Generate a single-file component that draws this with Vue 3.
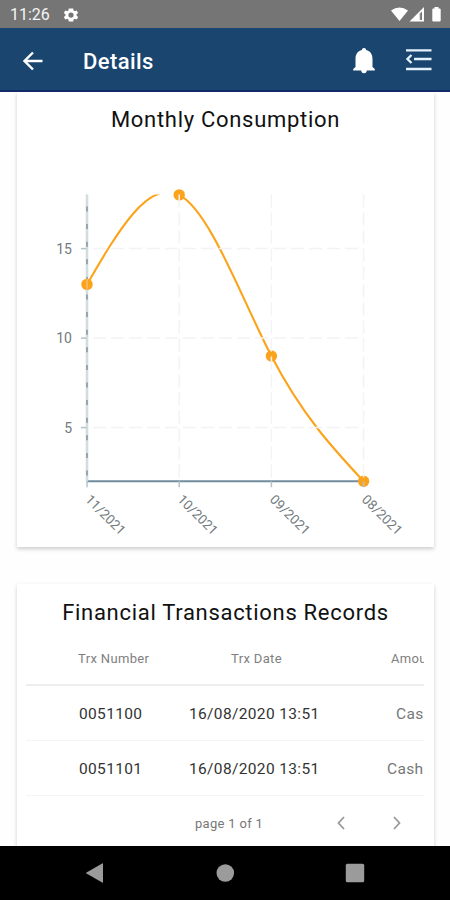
<template>
    <div class="screen">
        <div class="statusbar">
            <span class="time">11:26</span>
            <svg class="cog" viewBox="0 0 24 24"><path fill="#fff" d="M19.4 13a7.5 7.5 0 0 0 0-2l2.1-1.6-2-3.5-2.5 1a7 7 0 0 0-1.7-1L15 3.2H9l-.4 2.7a7 7 0 0 0-1.7 1l-2.5-1-2 3.5L4.6 11a7.5 7.5 0 0 0 0 2l-2.2 1.6 2 3.5 2.5-1a7 7 0 0 0 1.7 1l.4 2.7h6l.4-2.7a7 7 0 0 0 1.7-1l2.5 1 2-3.5zM12 15.500a3.500 3.500 0 1 1 0-7 3.500 3.500 0 0 1 0 7z" /></svg>
            <svg class="signals" viewBox="0 0 54 18">
                <path fill="#fff" d="M1 4.500Q9.500-1.300 18 4.500L9.500 15z" />
                <path fill="#fff" fill-rule="evenodd" d="M34 1v14.500H19.500zM29 8.500v5.500h3V5.500z" />
                <path fill="#ddd" d="M29 8.500l1.200-1.200V14H29z" />
                <path fill="#fff" d="M44.500 1h4v1.500h1.200q1 0 1 1V14.500q0 1-1 1h-6.400q-1 0-1-1V3.500q0-1 1-1h1.200z" />
            </svg>
        </div>
        <header class="appbar">
            <svg class="back" viewBox="0 0 20 20"><path d="M19.500 10H2M10 1.500L1.500 10l8.500 8.500" fill="none" stroke="#fff" stroke-width="2.400" /></svg>
            <h1>Details</h1>
            <svg class="bell" viewBox="0 0 22 26"><path fill="#fff" d="M11 0c1.300 0 2 .8 2.100 2 4.400 1 6.400 4.500 6.400 9v8l2.300 2v1.600H.2V21l2.300-2v-8c0-4.500 2-8 6.400-9C9 .8 9.700 0 11 0zM8.300 22.600h5.400a2.700 2.700 0 0 1-5.400 0z" /></svg>
            <svg class="menu" viewBox="0 0 26 24"><path d="M0 2.300h25.500M8 11h17.500M0 21h25.500M5.500 7L1.500 11l4 4" fill="none" stroke="#e6f1fb" stroke-width="2.300" /></svg>
        </header>
        <main class="content">
            <section class="card consumption">
                <h2>Monthly Consumption</h2>
                <svg class="chart" viewBox="0 0 417 400">
                    <defs>
                        <clipPath id="plot"><rect :x="left" :y="top" width="277" height="287" /></clipPath>
                    </defs>
                    <path class="axis" :d="`M${left} ${bottom}H${toX(3)}`" />
                    <path class="yaxis" :d="`M${left} ${top}V${bottom}`" />
                    <path class="ydash" :d="`M${left} ${top + 12}V${bottom}`" />
                    <path class="line" :d="curve" clip-path="url(#plot)" />
                    <circle v-for="(p, i) in points" :key="p.month" :cx="toX(i)" :cy="toY(p.value)" r="5.7" fill="#fca31c" />
                    <g v-for="t in ticks" :key="t">
                        <path class="grid" :d="`M${left + 6} ${toY(t)}H${toX(3)}`" />
                        <path class="tick" :d="`M${left - 6} ${toY(t)}h6`" />
                        <text class="label" :x="left - 15" :y="toY(t) + 5" text-anchor="end">{{ t }}</text>
                    </g>
                    <g v-for="(p, i) in points" :key="p.month">
                        <path :class="i ? 'grid' : 'shine'" :d="`M${toX(i)} ${top}V${bottom}`" />
                        <path class="tick" :d="`M${toX(i)} ${bottom}v6`" />
                        <text class="label month" :transform="`translate(${toX(i) - 2.5} ${bottom + 19}) rotate(45)`">{{ p.month }}</text>
                    </g>
                </svg>
            </section>
            <section class="card records">
                <h2>Financial Transactions Records</h2>
                <div class="table">
                    <div class="row head">
                        <span>Trx Number</span><span>Trx Date</span><span class="amount">Amount</span>
                    </div>
                    <div v-for="trx in transactions" :key="trx.number" class="row">
                        <span>{{ trx.number }}</span><span>{{ trx.date }}</span><span class="type" :class="{ cut: trx.type == 'Cas' }">{{ trx.type }}</span>
                    </div>
                </div>
                <div class="pager">
                    <span>page 1 of 1</span>
                    <svg viewBox="0 0 8 14"><path d="M7 1L1.500 7 7 13" /></svg>
                    <svg viewBox="0 0 8 14"><path d="M1 1l5.500 6L1 13" /></svg>
                </div>
            </section>
        </main>
        <nav class="navbar">
            <svg viewBox="0 0 20 20"><path fill="#9b9b9b" d="M18 .8v18.400q0 .8-.8.4L1.500 10.600q-.8-.6 0-1.200L17.200.4q.8-.4.8.4z" /></svg>
            <svg viewBox="0 0 20 20"><circle cx="10.300" cy="10" r="8.800" fill="#9b9b9b" /></svg>
            <svg viewBox="0 0 20 20"><rect x=".8" y=".8" width="18.400" height="18.400" rx="1.500" fill="#9b9b9b" /></svg>
        </nav>
    </div>
</template>
<script setup>
import { computed, ref } from 'vue';

const points = ref([
    { month: "11/2021", value: 13 },
    { month: "10/2021", value: 18 },
    { month: "09/2021", value: 9 },
    { month: "08/2021", value: 2 },
])
const transactions = ref([
    { number: "0051100", date: "16/08/2020 13:51", type: "Cas" },
    { number: "0051101", date: "16/08/2020 13:51", type: "Cash" },
])
const ticks = [5, 10, 15]

const left = 70
const top = 47.5
const bottom = 334.3
const toX = (i) => left + i * 92.2
const toY = (value) => bottom - (value - 2) * 17.9

// natural spline slopes, one for each month
const slopes = [8.867, -2.733, -9.933, -5.533]
const curve = computed(() => {
    let d = `M${toX(0)} ${toY(points.value[0].value)}`
    for (let i = 1; i < points.value.length; i++) {
        const from = points.value[i - 1].value + slopes[i - 1] / 3
        const to = points.value[i].value - slopes[i] / 3
        d += `C${toX(i - 2 / 3)} ${toY(from)} ${toX(i - 1 / 3)} ${toY(to)} ${toX(i)} ${toY(points.value[i].value)}`
    }
    return d
})
</script>

<style>
body {
    margin: 0;
    background: #fff;
}
</style>

<style scoped>
.screen {
    height: 900px;
    display: flex;
    flex-direction: column;
    overflow: hidden;
    background: #fefefe;
    font-family: Roboto, "Liberation Sans", sans-serif;
}

svg {
    display: block;
    flex: none;
}

.statusbar {
    height: 28px;
    flex: none;
    display: flex;
    align-items: center;
    background: #757575;
    color: #f4f4f4;
}

.time {
    width: 40px;
    margin-left: 10px;
    padding-top: 1px;
    font-size: 16px;
}

.cog {
    width: 18px;
    height: 18px;
    margin: 1px 0 0 12px;
}

.signals {
    width: 54px;
    height: 18px;
    margin: 2px 6px 0 auto;
}

.appbar {
    height: 64px;
    flex: none;
    box-sizing: border-box;
    display: flex;
    align-items: center;
    padding: 0 18px 0 23px;
    background: #19456f;
    border-bottom: 2px solid #142a68;
    color: #fff;
}

.back {
    width: 20px;
    height: 20px;
    margin-top: 3px;
}

h1 {
    flex: 1;
    margin: 4px 0 0 40px;
    font-size: 22px;
    font-weight: 500;
    letter-spacing: .4px;
}

.bell {
    width: 22px;
    height: 26px;
    margin: 4px 31px 0 0;
}

.menu {
    width: 26px;
    height: 24px;
    margin-top: 2px;
}

.content {
    flex: 1;
    min-height: 0;
    overflow: hidden;
    padding: 0 16px 0 17px;
}

.card {
    background: #fff;
    box-shadow: 0 2px 4px rgba(0, 0, 0, .2);
}

.consumption {
    height: 455px;
    margin-bottom: 37px;
}

h2 {
    margin: 0;
    color: #111;
    font-size: 22px;
    font-weight: 400;
    line-height: 28px;
    text-align: center;
}

.consumption h2 {
    height: 41px;
    padding-top: 14px;
    letter-spacing: .7px;
}

.chart {
    width: 417px;
    height: 400px;
}

.axis {
    stroke: #708d9d;
    stroke-width: 2;
}

.yaxis {
    stroke: #c9d6da;
    stroke-width: 2.5;
}

.ydash {
    stroke: #55707e;
    stroke-width: 1.5;
    stroke-dasharray: 5 12.6;
}

.grid {
    stroke: #f3f3f5;
    stroke-width: 1.5;
    stroke-dasharray: 13 5;
}

.shine {
    stroke: #e9eef0;
    stroke-width: 1;
    opacity: .6;
}

.tick {
    stroke: #b5c3ca;
    stroke-width: 1.5;
}

.line {
    fill: none;
    stroke: #fca31c;
    stroke-width: 2.1;
}

.label {
    fill: #737b80;
    font-size: 14px;
}

.month {
    font-size: 13.3px;
}

.records {
    height: 290px;
}

.records h2 {
    padding-top: 15px;
    letter-spacing: .7px;
}

.table {
    margin: 0 10px 0 9px;
    overflow: hidden;
}

.row {
    height: 55px;
    box-sizing: border-box;
    display: grid;
    grid-template-columns: 53px 110px 201px 1fr;
    align-items: center;
    padding-top: 2px;
    border-bottom: 1px solid #f4f4f4;
    color: #333;
    font-size: 15.5px;
    letter-spacing: .35px;
    white-space: nowrap;
}

.row span:first-child {
    grid-column: 2;
}

.row .type {
    margin-left: -3px;
    color: #777;
}

.row .cut {
    margin-left: 6px;
}

.head {
    height: 59px;
    padding-top: 6px;
    border-bottom: 2px solid #eee;
    color: #808080;
    font-size: 13px;
}

.row.head span:first-child {
    margin-left: -1px;
}

.head span:nth-child(2) {
    padding-left: 42px;
}

.head .amount {
    padding-left: 1px;
}

.pager {
    height: 54px;
    display: flex;
    align-items: center;
    padding-left: 178px;
    color: #777;
    font-size: 13px;
    letter-spacing: .3px;
}

.pager span {
    width: 142px;
}

.pager svg {
    width: 8px;
    height: 14px;
    margin-right: 48px;
    fill: none;
    stroke: #999;
    stroke-width: 1.8;
}

.pager span {
    flex: none;
}

.pager svg:first-of-type {
    margin-left: 0;
}

.navbar {
    height: 54px;
    flex: none;
    display: flex;
    align-items: center;
    gap: 110px;
    padding-left: 85px;
    box-sizing: border-box;
    background: #000;
}

.navbar svg {
    width: 20px;
    height: 20px;
}
</style>
